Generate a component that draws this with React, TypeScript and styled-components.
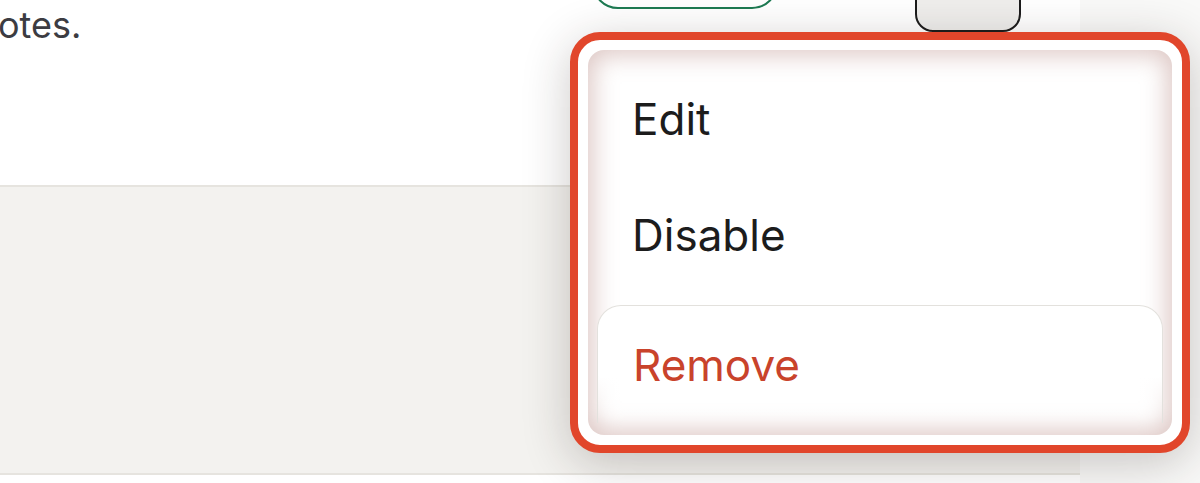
import * as React from 'react';
import styled, { createGlobalStyle } from 'styled-components';

const Global = createGlobalStyle`
  html, body {
    margin: 0;
    padding: 0;
    background: #ffffff;
    overflow: hidden;
  }
  body {
    font-family: Inter, "Noto Sans", sans-serif;
  }
`;

const Page = styled.div`
  display: flex;
  height: 483px;
  width: 1200px;
  position: relative;
  overflow: hidden;
`;

const Main = styled.div`
  width: 1080px;
  display: flex;
  flex-direction: column;
`;

const Strip = styled.div`
  flex: 1;
  background: #f9f9f8;
`;

const Card = styled.div`
  height: 187px;
  background: #ffffff;
  border-bottom: 2px solid #e6e4df;
  box-sizing: border-box;
`;

const Header = styled.div`
  display: flex;
  align-items: flex-start;
`;

const Note = styled.p`
  width: 594px;
  margin: 5px 0 0 -2px;
  font-family: Inter, "Noto Sans", sans-serif;
  font-size: 36px;
  line-height: 40px;
  color: #3c3c42;
`;

const Button = styled.div<{ $tone: 'green' | 'dark' }>`
  box-sizing: border-box;
  border: 2px solid ${(p) => (p.$tone === 'green' ? '#1d7a52' : '#1c1c1c')};
  background: ${(p) => (p.$tone === 'green' ? '#ffffff' : '#efeeec')};
  border-radius: ${(p) => (p.$tone === 'green' ? '26px' : '18px')};
  width: ${(p) => (p.$tone === 'green' ? '186px' : '106px')};
  height: 56px;
  margin-top: ${(p) => (p.$tone === 'green' ? '-47px' : '-24px')};
  margin-left: ${(p) => (p.$tone === 'green' ? '0' : '137px')};
`;

const Section = styled.div`
  height: 288px;
  background: #f3f2ef;
  border-bottom: 2px solid #e6e4df;
  box-sizing: border-box;
`;

const Ring = styled.div`
  position: absolute;
  left: 570px;
  top: 32px;
  width: 620px;
  height: 421px;
  box-sizing: border-box;
  border: 8px solid #e1462b;
  border-radius: 30px;
  padding: 10px;
  background: #ffffff;
  box-shadow: 0 10px 48px rgba(40, 30, 25, 0.24);
`;

const Menu = styled.ul`
  list-style: none;
  margin: 0;
  height: 100%;
  box-sizing: border-box;
  padding: 11px 0 10px;
  border-radius: 16px;
  background: #ffffff;
  box-shadow: inset 0 0 24px 5px rgba(170, 115, 108, 0.4);
`;

const Item = styled.li<{ $danger?: boolean }>`
  font-family: Inter, "Noto Sans", sans-serif;
  font-size: 44px;
  line-height: 50px;
  padding: ${(p) => (p.$danger ? '34px 35px 33px' : '33px 44px')};
  color: ${(p) => (p.$danger ? '#c9432b' : '#1c1c1c')};
  ${(p) =>
    p.$danger &&
    `
    margin: 12px 9px 0;
    border: 1px solid #e3e1dd;
    border-bottom: none;
    border-radius: 24px 24px 0 0;
    background: linear-gradient(#ffffff 60%, rgba(255,255,255,0));
  `}
`;

export default function App() {
  return (
    <>
      <Global />
      <Page>
        <Main>
          <Card>
            <Header>
              <Note>otes.</Note>
              <Button $tone="green" />
              <Button $tone="dark" />
            </Header>
          </Card>
          <Section />
        </Main>
        <Strip />
        <Ring>
          <Menu>
            <Item>Edit</Item>
            <Item>Disable</Item>
            <Item $danger>Remove</Item>
          </Menu>
        </Ring>
      </Page>
    </>
  );
}
